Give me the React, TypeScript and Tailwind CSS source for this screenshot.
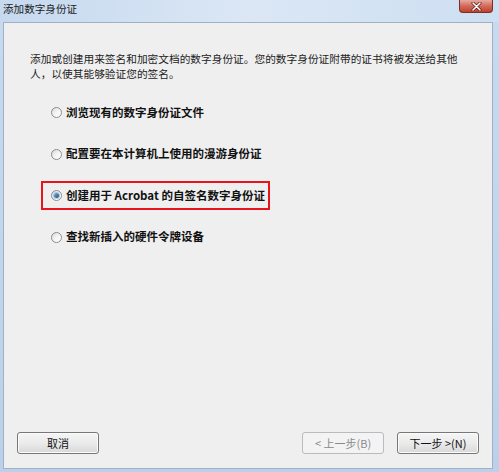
import React from "react";

const font = { fontFamily: '"Noto Sans CJK SC", "Noto Sans", sans-serif' };

function Radio({ checked }: { checked?: boolean }) {
  return (
    <span className="relative flex h-[11px] w-[11px] shrink-0 items-center justify-center rounded-full border border-[#8a8c8e] bg-gradient-to-br from-[#d9dadb] via-[#f4f4f4] to-[#ffffff]">
      {checked && (
        <span className="h-[5px] w-[5px] rounded-full bg-gradient-to-br from-[#7fb0d8] to-[#1d4d7a] shadow-[0_0_0_1px_#a9c8e3]" />
      )}
    </span>
  );
}

function Row({ label, checked, boxed }: { label: string; checked?: boolean; boxed?: boolean }) {
  return (
    <div
      className={
        "flex h-[29px] w-[229px] items-center gap-[4px] border-2 pl-[8px] " +
        (boxed ? "border-[#e8131b]" : "border-transparent")
      }
    >
      <Radio checked={checked} />
      <span className="whitespace-nowrap text-[11.5px] font-bold leading-none text-[#111]">{label}</span>
    </div>
  );
}

function Btn({ children, disabled }: { children: React.ReactNode; disabled?: boolean }) {
  return (
    <div
      className={
        "flex h-[22px] w-[82px] items-center justify-center rounded-[3px] border text-[11px] leading-none " +
        (disabled
          ? "border-[#b8bcbf] bg-[#f3f3f3] text-[#8a8a8a]"
          : "border-[#777] bg-gradient-to-b from-[#f5f5f5] via-[#ebebeb] to-[#d8d8d8] text-[#111] shadow-[inset_0_0_0_1px_#fbfbfb]")
      }
    >
      {children}
    </div>
  );
}

export default function App() {
  return (
    <div
      className="flex h-[472px] w-[499px] flex-col overflow-hidden bg-gradient-to-b from-[#c8daef] to-[#bcd1e9]"
      style={font}
    >
      <div className="flex h-[22px] shrink-0 items-start justify-between bg-gradient-to-r from-[#c6d9ef] via-[#dbe7f5] to-[#cddff2]">
        <span className="pl-[3px] pt-[4px] text-[10.6px] leading-none text-[#1b1b1b]">添加数字身份证</span>
        <div className="mr-[6px] flex h-[13px] w-[34px] items-center justify-center rounded-b-[4px] border border-t-0 border-[#7a2e26] bg-gradient-to-b from-[#e7a9a0] via-[#d26a5a] to-[#c0402c]">
          <svg width="11" height="9" viewBox="0 0 11 9">
            <path d="M2 1 L9 8 M9 1 L2 8" stroke="#5a1a14" strokeWidth="3" strokeLinecap="round" />
            <path d="M2 1 L9 8 M9 1 L2 8" stroke="#ffffff" strokeWidth="1.6" strokeLinecap="round" />
          </svg>
        </div>
      </div>
      <div className="mb-[3px] ml-[3px] mr-[6px] flex flex-1 flex-col border border-[#9fb1c6] bg-[#efefef]">
        <p className="whitespace-nowrap pl-[26px] pt-[28px] text-[10.7px] leading-[15px] text-[#222]">
          添加或创建用来签名和加密文档的数字身份证。您的数字身份证附带的证书将被发送给其他
          <br />
          人，以使其能够验证您的签名。
        </p>
        <div className="ml-[37px] mt-[17px] flex flex-col gap-[12.5px]">
          <Row label="浏览现有的数字身份证文件" />
          <Row label="配置要在本计算机上使用的漫游身份证" />
          <Row label="创建用于 Acrobat 的自签名数字身份证" checked boxed />
          <Row label="查找新插入的硬件令牌设备" />
        </div>
        <div className="flex-1" />
        <div className="flex items-center justify-between px-[13px] pb-[14px]">
          <Btn>取消</Btn>
          <div className="flex gap-[13px]">
            <Btn disabled>&lt; 上一步(B)</Btn>
            <Btn>下一步 &gt;(N)</Btn>
          </div>
        </div>
      </div>
    </div>
  );
}
